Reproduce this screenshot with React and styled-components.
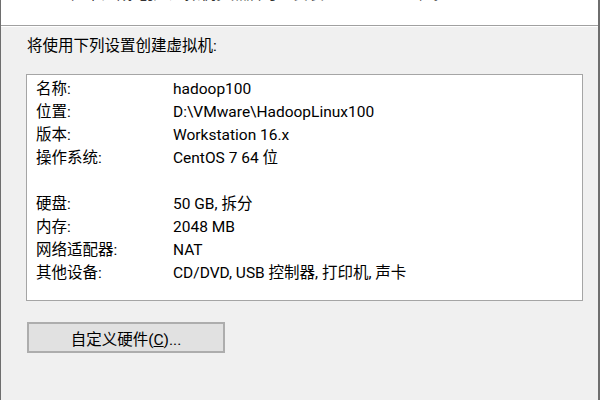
import React from 'react'
import styled, { createGlobalStyle } from 'styled-components'

const GlobalStyle = createGlobalStyle`
  html, body {
    margin: 0;
    padding: 0;
    background: #f0f0f0;
  }
  body {
    font-family: Roboto, "Noto Sans CJK SC", sans-serif;
    color: #000;
  }
`

const Window = styled.div`
  width: 600px;
  height: 400px;
  box-sizing: border-box;
  border-left: 1px solid #6e6e6e;
  border-right: 2px solid #6e6e6e;
  background: #f0f0f0;
  display: flex;
  flex-direction: column;
  overflow: hidden;
`

const Header = styled.div`
  height: 25px;
  flex: none;
  background: #fff;
  border-bottom: 1px solid #a0a0a0;
  box-shadow: 0 1px 0 #fff;
  overflow: hidden;
  padding-left: 64px;
`

const Subtitle = styled.div`
  font-size: 15.5px;
  line-height: 20px;
  margin-top: -16px;
  white-space: nowrap;
  color: #333;
`

const Body = styled.div`
  padding: 10px 15px 0 25px;
  font-size: 15.5px;
`

const Intro = styled.div`
  line-height: 20px;
  padding-left: 1px;
`

const SummaryBox = styled.div`
  margin-top: 18px;
  height: 227px;
  box-sizing: border-box;
  background: #fff;
  border: 1px solid #a5a5a5;
  padding: 3px 8px 0 9px;
  display: grid;
  grid-template-columns: 137px 1fr;
  grid-auto-rows: 23px;
  align-items: center;
`

const Cell = styled.div`
  white-space: nowrap;
  line-height: 23px;
`

const CustomButton = styled.button`
  margin-top: 21px;
  margin-left: 1px;
  width: 198px;
  height: 31px;
  background: #e1e1e1;
  border: 2px solid #adadad;
  box-sizing: border-box;
  font-family: inherit;
  font-size: 15.5px;
  color: #000;
  padding: 0;
  u { text-decoration: underline; }
`

const rows = [
  ['名称:', 'hadoop100'],
  ['位置:', 'D:\\VMware\\HadoopLinux100'],
  ['版本:', 'Workstation 16.x'],
  ['操作系统:', 'CentOS 7 64 位'],
  ['', ''],
  ['硬盘:', '50 GB, 拆分'],
  ['内存:', '2048 MB'],
  ['网络适配器:', 'NAT'],
  ['其他设备:', 'CD/DVD, USB 控制器, 打印机, 声卡'],
]

export default function App () {
  return (
    <>
      <GlobalStyle />
      <Window>
        <Header>
          <Subtitle>单击“完成”创建虚拟机。然后可以安装 CentOS 7 64 位。</Subtitle>
        </Header>
        <Body>
          <Intro>将使用下列设置创建虚拟机:</Intro>
          <SummaryBox>
            {rows.map(([name, value], i) => (
              <React.Fragment key={i}>
                <Cell>{name}</Cell>
                <Cell>{value}</Cell>
              </React.Fragment>
            ))}
          </SummaryBox>
          <CustomButton>自定义硬件(<u>C</u>)...</CustomButton>
        </Body>
      </Window>
    </>
  )
}
